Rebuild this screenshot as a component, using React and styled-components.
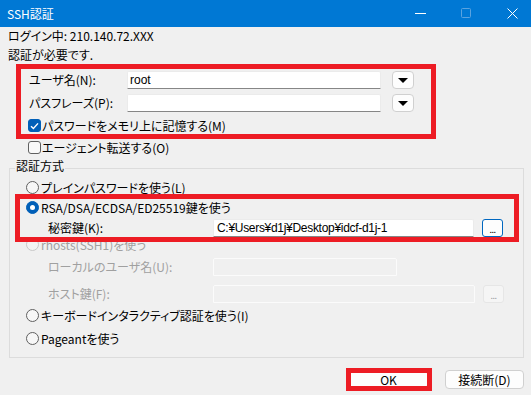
import React from "react";
import styled, { createGlobalStyle } from "styled-components";

const FONT = `"Noto Sans CJK JP", "Noto Sans", sans-serif`;
const LATIN_FONT = `"Liberation Sans", "Noto Sans CJK JP", sans-serif`;

const GlobalStyle = createGlobalStyle`
  html, body { margin: 0; padding: 0; background: #f0f0f0; }
  body { font-family: ${FONT}; }
`;

const Window = styled.div`
  position: relative;
  width: 531px;
  height: 395px;
  overflow: hidden;
  background: #f0f0f0;
  font-family: ${FONT};
  font-feature-settings: "palt";
  font-size: 12px;
  color: #000;
`;

const TitleBar = styled.div`
  height: 27px;
  background: #0078d4;
  display: flex;
  align-items: center;
  padding: 0 13px 0 7px;
  color: #fff;
`;

const Title = styled.div`
  flex: 1;
  font-size: 12px;
  line-height: 27px;
`;

const Controls = styled.div`
  display: flex;
  align-items: center;
  gap: 35px;
`;

const ControlIcon = styled.svg`
  width: 11px;
  height: 11px;
  display: block;
`;

const Body = styled.div`
  padding: 0 7px 0 8px;
`;

const InfoLine = styled.div`
  height: ${(p) => p.$h}px;
  line-height: ${(p) => p.$h}px;
  white-space: nowrap;
`;

const FieldRow = styled.div`
  display: flex;
  align-items: center;
  height: 18px;
  margin-top: ${(p) => p.$mt || 0}px;
  padding-left: ${(p) => p.$indent}px;
`;

const FieldLabel = styled.span`
  flex: none;
  width: ${(p) => p.$w}px;
  line-height: 18px;
  white-space: nowrap;
  color: ${(p) => (p.$disabled ? "#a0a0a0" : "#000")};
`;

const TextBox = styled.div`
  flex: none;
  box-sizing: border-box;
  width: ${(p) => p.$w}px;
  height: 18px;
  padding-left: ${(p) => (p.$pad ? p.$pad : 2)}px;
  background: ${(p) => (p.$disabled ? "#f0f0f0" : "#fff")};
  border: 1px solid ${(p) => (p.$disabled ? "#fbfbfb" : "#ebebeb")};
  border-bottom-color: ${(p) => (p.$disabled ? "#fbfbfb" : "#868686")};
  border-radius: 2px 2px 0 0;
  font-family: ${LATIN_FONT};
  letter-spacing: ${(p) => (p.$tight ? "-0.3px" : "0")};
  line-height: 16px;
  white-space: nowrap;
  overflow: hidden;
`;

const DropButton = styled.div`
  flex: none;
  box-sizing: border-box;
  width: 22px;
  height: 18px;
  margin-left: 11px;
  border: 1px solid #d0d0d0;
  border-radius: 4px;
  background: #fdfdfd;
  display: flex;
  align-items: center;
  justify-content: center;
`;

const DownArrow = styled.span`
  width: 0;
  height: 0;
  border-left: 5px solid transparent;
  border-right: 5px solid transparent;
  border-top: 5px solid #000;
  margin-top: 1px;
`;

const BrowseButton = styled.div`
  flex: none;
  box-sizing: border-box;
  width: 21px;
  height: 18px;
  margin-left: ${(p) => p.$ml}px;
  border: 1px solid ${(p) => (p.$disabled ? "#e6e6e6" : "#0067c0")};
  border-radius: 3px;
  background: ${(p) => (p.$disabled ? "#f5f5f5" : "#fdfdfd")};
  color: ${(p) => (p.$disabled ? "#a0a0a0" : "#000")};
  font-size: 9px;
  line-height: 20px;
  text-align: center;
  letter-spacing: -0.5px;
`;

const CheckRow = styled.div`
  display: flex;
  align-items: center;
  gap: 1px;
  height: 15px;
  margin-top: ${(p) => p.$mt}px;
  padding-left: ${(p) => p.$indent}px;
  line-height: 15px;
  white-space: nowrap;
`;

const CheckBox = styled.span`
  flex: none;
  box-sizing: border-box;
  width: 13px;
  height: 13px;
  border-radius: 3px;
  border: 1px solid ${(p) => (p.$checked ? "#005fb8" : "#606060")};
  background: ${(p) => (p.$checked ? "#005fb8" : "#f9f9f9")};
  display: flex;
  align-items: center;
  justify-content: center;
`;

const Group = styled.fieldset`
  margin: 4px 0 0 1px;
  padding: 0 0 11px 0;
  border: 1px solid #dcdcdc;
  min-width: 0;
`;

const GroupLegend = styled.legend`
  margin-left: 5px;
  padding: 0 1px 4px;
  line-height: 14px;
  font-size: 12px;
`;

const RadioRow = styled.div`
  display: flex;
  align-items: center;
  gap: 2px;
  height: 15px;
  margin-top: ${(p) => p.$mt}px;
  padding-left: 16px;
  line-height: 15px;
  white-space: nowrap;
  color: ${(p) => (p.$disabled ? "#a0a0a0" : "#000")};
`;

const RadioDot = styled.span`
  flex: none;
  position: relative;
  box-sizing: border-box;
  width: 13px;
  height: 13px;
  border-radius: 50%;
  border: 1px solid
    ${(p) => (p.$checked ? "#005fb8" : p.$disabled ? "#c8c8c8" : "#606060")};
  background: ${(p) => (p.$checked ? "#005fb8" : p.$disabled ? "#f3f3f3" : "#f7f7f7")};

  &::after {
    content: "";
    display: ${(p) => (p.$checked ? "block" : "none")};
    position: absolute;
    left: 3px;
    top: 3px;
    width: 5px;
    height: 5px;
    border-radius: 50%;
    background: #fff;
  }
`;

const ButtonBar = styled.div`
  display: flex;
  justify-content: flex-end;
  gap: 17px;
  margin-top: 12px;
`;

const PushButton = styled.div`
  box-sizing: border-box;
  width: 79px;
  height: 19px;
  border: 1px solid #d0d0d0;
  border-radius: 4px;
  background: #fdfdfd;
  display: flex;
  align-items: center;
  justify-content: center;
  line-height: 17px;
`;

const Highlight = styled.div`
  position: absolute;
  left: ${(p) => p.$x}px;
  top: ${(p) => p.$y}px;
  width: ${(p) => p.$w}px;
  height: ${(p) => p.$h}px;
  box-sizing: border-box;
  border: 5px solid #ed1c24;
  pointer-events: none;
`;

const Check = () => (
  <svg width="9" height="8" viewBox="0 0 9 8">
    <path d="M1 4.2 L3.4 6.5 L8 1.4" fill="none" stroke="#fff" strokeWidth="1.4" />
  </svg>
);

export default function App() {
  return (
    <>
      <GlobalStyle />
      <Window>
        <TitleBar>
          <Title>SSH認証</Title>
          <Controls>
            <ControlIcon viewBox="0 0 11 11">
              <path d="M0 5.5 H11" stroke="#fff" strokeWidth="1" />
            </ControlIcon>
            <ControlIcon viewBox="0 0 11 11">
              <rect x="0.5" y="0.5" width="9" height="9" rx="1" fill="none" stroke="#5aa3e0" strokeWidth="1" />
            </ControlIcon>
            <ControlIcon viewBox="0 0 11 11">
              <path d="M0.5 0.5 L10.5 10.5 M10.5 0.5 L0.5 10.5" stroke="#fff" strokeWidth="1" />
            </ControlIcon>
          </Controls>
        </TitleBar>

        <Body>
          <InfoLine $h={18}>ログイン中: 210.140.72.XXX</InfoLine>
          <InfoLine $h={19}>認証が必要です.</InfoLine>

          <FieldRow $mt={7} $indent={21}>
            <FieldLabel $w={98}>ユーザ名(N):</FieldLabel>
            <TextBox $w={254}>root</TextBox>
            <DropButton><DownArrow /></DropButton>
          </FieldRow>
          <FieldRow $mt={5} $indent={21}>
            <FieldLabel $w={98}>パスフレーズ(P):</FieldLabel>
            <TextBox $w={254} />
            <DropButton><DownArrow /></DropButton>
          </FieldRow>

          <CheckRow $mt={6} $indent={20}>
            <CheckBox $checked><Check /></CheckBox>
            パスワードをメモリ上に記憶する(M)
          </CheckRow>
          <CheckRow $mt={7} $indent={20}>
            <CheckBox />
            エージェント転送する(O)
          </CheckRow>

          <Group>
            <GroupLegend>認証方式</GroupLegend>
            <RadioRow $mt={3}>
              <RadioDot />
              プレインパスワードを使う(L)
            </RadioRow>
            <RadioRow $mt={5}>
              <RadioDot $checked />
              RSA/DSA/ECDSA/ED25519鍵を使う
            </RadioRow>
            <FieldRow $mt={4} $indent={38}>
              <FieldLabel $w={165}>秘密鍵(K):</FieldLabel>
              <TextBox $w={261} $pad={3} $tight>C:¥Users¥d1j¥Desktop¥idcf-d1j-1</TextBox>
              <BrowseButton $ml={8}>...</BrowseButton>
            </FieldRow>
            <RadioRow $mt={0} $disabled>
              <RadioDot $disabled />
              rhosts(SSH1)を使う
            </RadioRow>
            <FieldRow $mt={6} $indent={38}>
              <FieldLabel $w={165} $disabled>ローカルのユーザ名(U):</FieldLabel>
              <TextBox $w={184} $disabled />
            </FieldRow>
            <FieldRow $mt={9} $indent={38}>
              <FieldLabel $w={165} $disabled>ホスト鍵(F):</FieldLabel>
              <TextBox $w={262} $disabled />
              <BrowseButton $ml={8} $disabled>...</BrowseButton>
            </FieldRow>
            <RadioRow $mt={5}>
              <RadioDot />
              キーボードインタラクティブ認証を使う(I)
            </RadioRow>
            <RadioRow $mt={8}>
              <RadioDot />
              Pageantを使う
            </RadioRow>
          </Group>

          <ButtonBar>
            <PushButton>OK</PushButton>
            <PushButton>接続断(D)</PushButton>
          </ButtonBar>
        </Body>

        <Highlight $x={16} $y={64} $w={420} $h={75} />
        <Highlight $x={15} $y={194} $w={504} $h={48} />
        <Highlight $x={346} $y={368} $w={86} $h={23} />
      </Window>
    </>
  );
}
